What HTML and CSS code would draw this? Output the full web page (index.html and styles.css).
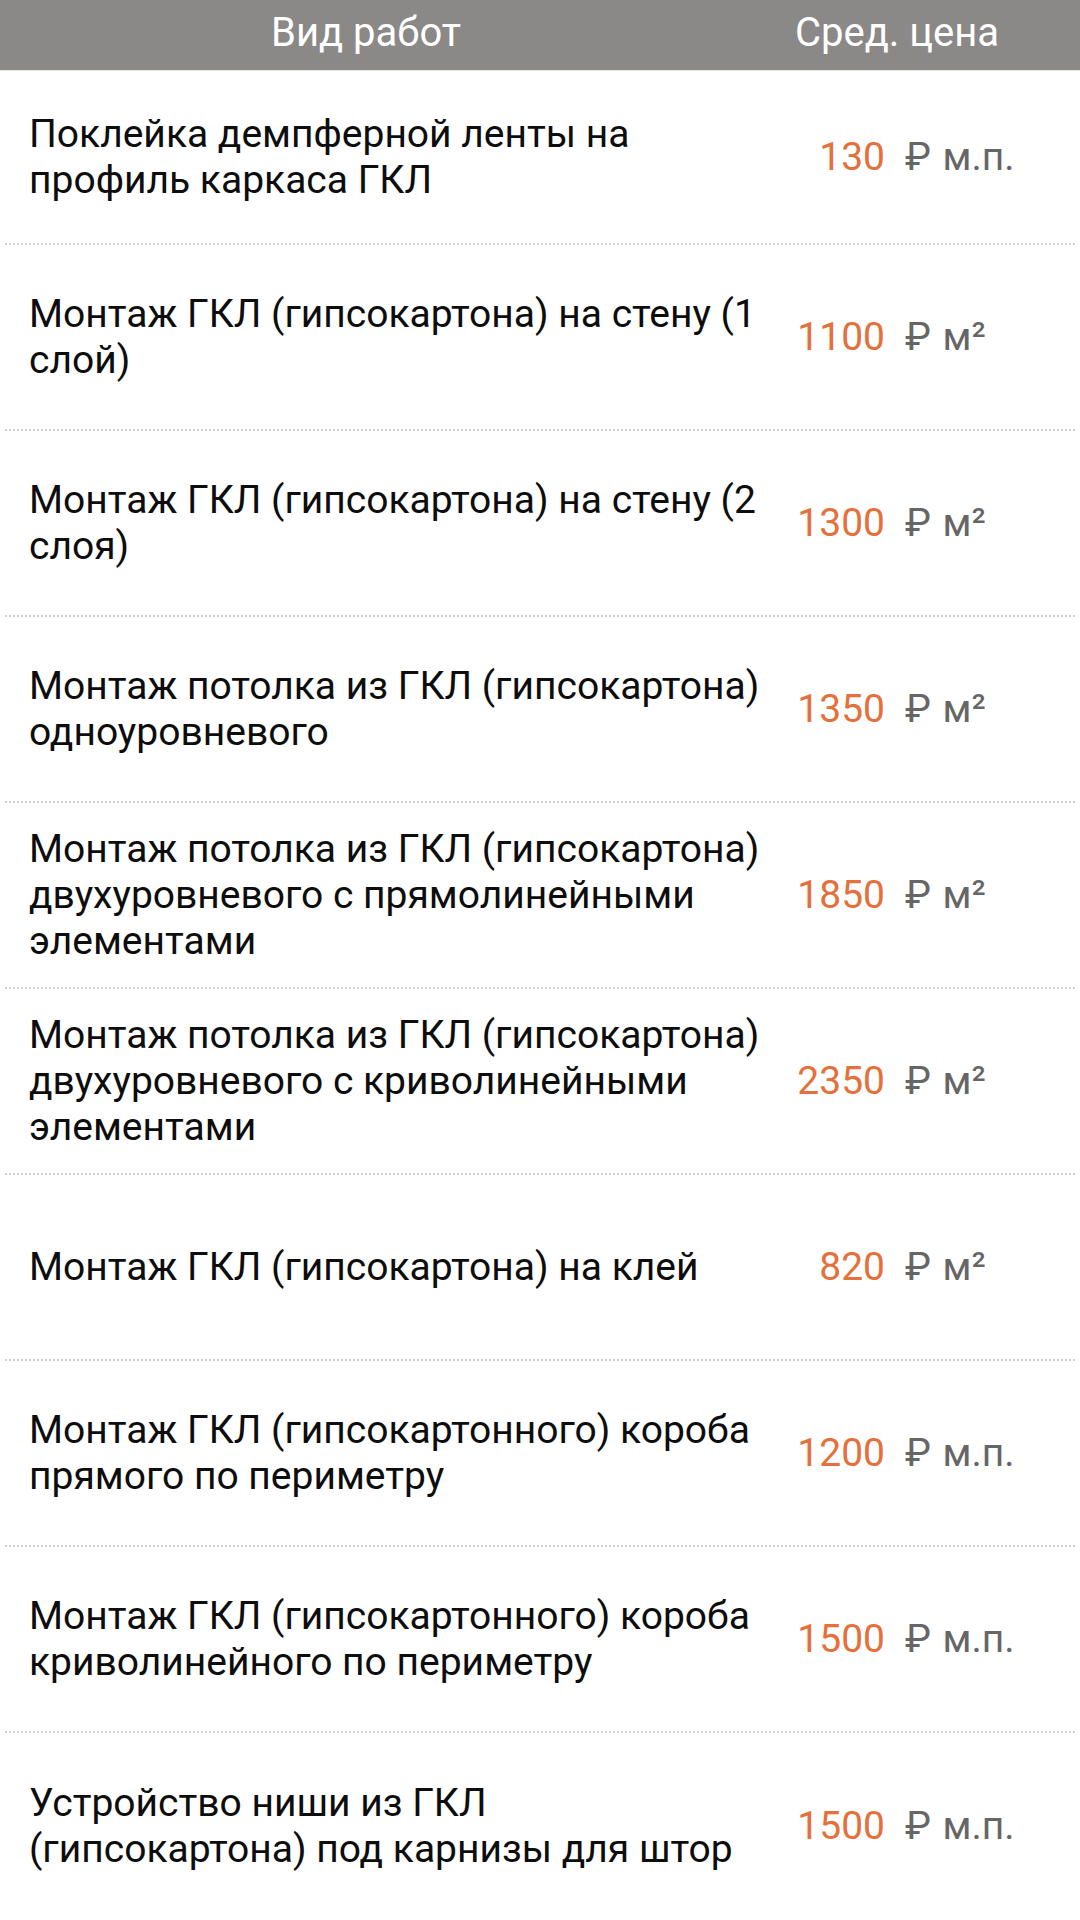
FILE: index.html
```html
<!DOCTYPE html>
<html>
<head>
  <meta charset="utf-8">
  <title>Цены на монтаж ГКЛ</title>
  <link rel="stylesheet" href="styles.css">
</head>
<body>
  <div class="price-table">
    <div class="table-head">
      <div class="head-name">Вид работ</div>
      <div class="head-price">Сред. цена</div>
    </div>

    <!-- Rows of the price list -->
    <div class="price-row first-row">
      <div class="work-name">Поклейка демпферной ленты на профиль каркаса ГКЛ</div>
      <div class="work-price"><span class="amount">130</span><span class="unit">₽ м.п.</span></div>
    </div>
    <div class="price-row">
      <div class="work-name">Монтаж ГКЛ (гипсокартона) на стену (1 слой)</div>
      <div class="work-price"><span class="amount">1100</span><span class="unit">₽ м²</span></div>
    </div>
    <div class="price-row">
      <div class="work-name">Монтаж ГКЛ (гипсокартона) на стену (2 слоя)</div>
      <div class="work-price"><span class="amount">1300</span><span class="unit">₽ м²</span></div>
    </div>
    <div class="price-row">
      <div class="work-name">Монтаж потолка из ГКЛ (гипсокартона) одноуровневого</div>
      <div class="work-price"><span class="amount">1350</span><span class="unit">₽ м²</span></div>
    </div>
    <div class="price-row">
      <div class="work-name">Монтаж потолка из ГКЛ (гипсокартона) двухуровневого с прямолинейными элементами</div>
      <div class="work-price"><span class="amount">1850</span><span class="unit">₽ м²</span></div>
    </div>
    <div class="price-row">
      <div class="work-name">Монтаж потолка из ГКЛ (гипсокартона) двухуровневого с криволинейными элементами</div>
      <div class="work-price"><span class="amount">2350</span><span class="unit">₽ м²</span></div>
    </div>
    <div class="price-row">
      <div class="work-name">Монтаж ГКЛ (гипсокартона) на клей</div>
      <div class="work-price"><span class="amount">820</span><span class="unit">₽ м²</span></div>
    </div>
    <div class="price-row">
      <div class="work-name">Монтаж ГКЛ (гипсокартонного) короба прямого по периметру</div>
      <div class="work-price"><span class="amount">1200</span><span class="unit">₽ м.п.</span></div>
    </div>
    <div class="price-row">
      <div class="work-name">Монтаж ГКЛ (гипсокартонного) короба криволинейного по периметру</div>
      <div class="work-price"><span class="amount">1500</span><span class="unit">₽ м.п.</span></div>
    </div>
    <div class="price-row last-row">
      <div class="work-name">Устройство ниши из ГКЛ (гипсокартона) под карнизы для штор</div>
      <div class="work-price"><span class="amount">1500</span><span class="unit">₽ м.п.</span></div>
    </div>
  </div>
</body>
</html>
```

FILE: styles.css
```css
body {
  margin: 0;
  background-color: white;
  font-family: Roboto, "Noto Sans", sans-serif;
  font-size: 39px;
  color: #0d0d0d;
}

.price-table {
  width: 1080px;
  height: 1920px;
  overflow: hidden;
}

/* Gray header bar */
.table-head {
  display: flex;
  height: 70px;
  background-color: #8a8987;
  border-bottom: 1px solid #e2e2e2;
  color: white;
  font-size: 40px;
  line-height: 66px;
}

.head-name {
  width: 732px;
  text-align: center;
}

.head-price {
  flex: 1;
  padding-right: 18px;
  text-align: center;
}

.price-row {
  display: flex;
  align-items: center;
  box-sizing: border-box;
  min-height: 186px;
  margin: 0 5px;
  padding-left: 24px;
  border-bottom: 2px dotted #cfcfcf;
}

.first-row {
  min-height: 174px;
}

.last-row {
  border-bottom: none;
}

.work-name {
  width: 738px;
  padding-right: 8px;
  line-height: 46px;
}

.work-price {
  display: flex;
  align-items: baseline;
  white-space: nowrap;
}

.amount {
  width: 110px;
  text-align: right;
  color: #e4703b;
}

.unit {
  margin-left: 20px;
  color: #666;
  word-spacing: 2px;
}
```
